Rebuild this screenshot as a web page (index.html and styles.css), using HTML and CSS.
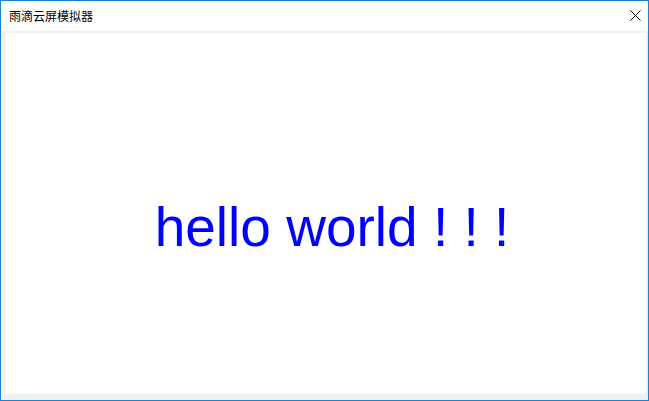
FILE: index.html
```html
<!DOCTYPE html>
<html lang="zh">
<head>
<meta charset="utf-8">
<title>雨滴云屏模拟器</title>
<link rel="stylesheet" href="styles.css">
</head>
<body>
<div class="window">
  <div class="titlebar">
    <span class="title">雨滴云屏模拟器</span>
    <svg class="close" width="11" height="11" viewBox="0 0 11 11">
      <path d="M0.5 0.5 L10.5 10.5 M10.5 0.5 L0.5 10.5" stroke="#000" stroke-width="1" fill="none"/>
    </svg>
  </div>
  <div class="frame">
    <div class="screen">
      <span class="hello">hello world ! ! !</span>
    </div>
  </div>
</div>
</body>
</html>
```

FILE: styles.css
```css
html, body {
  margin: 0;
  padding: 0;
  width: 649px;
  height: 401px;
  overflow: hidden;
  background: #ffffff;
}
.window {
  box-sizing: border-box;
  width: 649px;
  height: 401px;
  border: 1px solid #1883d7;
  display: flex;
  flex-direction: column;
  background: #ffffff;
}
.titlebar {
  height: 30px;
  flex: none;
  display: flex;
  align-items: center;
  justify-content: space-between;
  padding: 0 7px 0 8px;
  background: #ffffff;
}
.title {
  font-family: "Noto Sans CJK SC", "Microsoft YaHei", sans-serif;
  font-size: 12px;
  color: #000000;
  line-height: 1;
  margin-top: -1px;
}
.close {
  display: block;
  margin-top: -1px;
}
.frame {
  flex: 1;
  background: #f0f0f0;
  padding: 2px 2px 6px 4px;
  display: flex;
}
.screen {
  flex: 1;
  background: #ffffff;
  display: flex;
  align-items: center;
  justify-content: center;
  padding: 26px 0 0 13px;
}
.hello {
  font-family: "Liberation Sans", Arial, sans-serif;
  font-size: 55px;
  color: #0000ff;
  white-space: pre;
}
```
